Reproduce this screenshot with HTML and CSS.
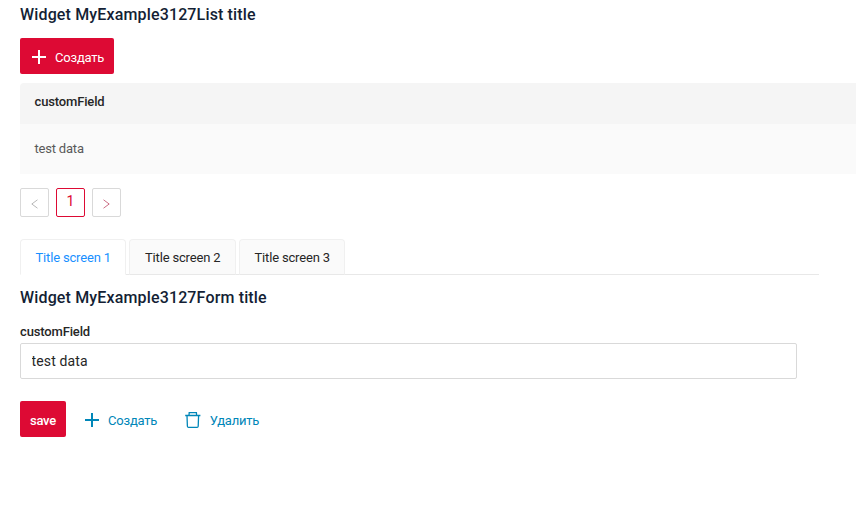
FILE: index.html
```html
<!DOCTYPE html>
<html lang="ru">
<head>
<meta charset="utf-8">
<title>MyExample3127</title>
<link rel="stylesheet" href="styles.css">
</head>
<body>
<main class="page">
  <section>
    <h2 class="title">Widget MyExample3127List title</h2>
    <button class="btn btn-primary btn-add">
      <svg class="plus" width="14" height="14" viewBox="0 0 14 14"><path d="M6 0h2v6h6v2H8v6H6V8H0V6h6z"/></svg>
      <span>Создать</span>
    </button>
    <div class="table">
      <div class="table-head">customField</div>
      <div class="table-row">test data</div>
    </div>
    <nav class="pages">
      <span class="page-item prev"><svg width="7" height="10" viewBox="0 0 7 10"><path d="M6.5 .8L.8 5l5.700 4.200"/></svg></span>
      <span class="page-item active">1</span>
      <span class="page-item next"><svg width="7" height="10" viewBox="0 0 7 10"><path d="M.5 .8L6.200 5 .5 9.200"/></svg></span>
    </nav>
  </section>
  <nav class="tabs">
    <span class="tab selected">Title screen 1</span>
    <span class="tab tab-wide">Title screen 2</span>
    <span class="tab">Title screen 3</span>
  </nav>
  <section>
    <h2 class="title form-title">Widget MyExample3127Form title</h2>
    <label class="label" for="field">customField</label>
    <input class="input" id="field" type="text" value="test data">
    <div class="actions">
      <button class="btn btn-primary btn-save"><span>save</span></button>
      <button class="btn btn-link">
        <svg class="plus" width="14" height="14" viewBox="0 0 14 14"><path d="M6 0h2v6h6v2H8v6H6V8H0V6h6z"/></svg>
        <span>Создать</span>
      </button>
      <button class="btn btn-link btn-delete">
        <svg class="trash" width="16" height="16" viewBox="0 0 16 16"><path d="M.2 3.500h15.200M4 3.200L4.200.7h7.200l.2 2.500M2 3.700l.4 10.500q.1 1.100 1.100 1.100h8.600q1 0 1.100-1.100l.4-10.500"/></svg>
        <span>Удалить</span>
      </button>
    </div>
  </section>
</main>
</body>
</html>
```
FILE: styles.css
```css
* { box-sizing: border-box; }
body {
  margin: 0;
  background: #fff;
  color: #262626;
  font-family: Roboto, sans-serif;
  font-size: 13px;
  overflow: hidden;
}
.page { padding: 3px 0 0 20px; }
.title {
  margin: 0 0 11px;
  color: #141f35;
  font-size: 16px;
  font-weight: 500;
  letter-spacing: .15px;
  line-height: 24px;
}
.btn {
  display: flex;
  align-items: center;
  height: 36px;
  margin: 0;
  padding: 0;
  border: 0;
  border-radius: 2px;
  background: none;
  font: 400 13px/20px Roboto, sans-serif;
  letter-spacing: -.2px;
  white-space: nowrap;
}
.btn svg { flex: none; }
.btn span { padding-top: 2px; }
.plus { fill: currentColor; }
.btn-primary { background: #dd0a34; color: #fff; }
.btn-add { width: 94px; padding: 2px 0 0 12px; gap: 9px; }
.table {
  margin-top: 9px;
  border-radius: 4px 0 0 0;
  overflow: hidden;
}
.table-head {
  height: 41px;
  padding: 9px 14.500px;
  background: #f5f5f5;
  font-weight: 500;
  letter-spacing: -.15px;
  line-height: 20px;
}
.table-row {
  height: 50px;
  padding: 15px 14.500px;
  background: #fafafa;
  color: #595959;
  letter-spacing: -.2px;
  line-height: 20px;
}
.pages { display: flex; gap: 7px; margin-top: 14px; }
.page-item {
  display: flex;
  align-items: center;
  justify-content: center;
  width: 29px;
  height: 29px;
  border: 1px solid #d9d9d9;
  border-radius: 2px;
}
.page-item svg { fill: none; stroke: #b8b8b8; margin-top: 2px; }
.page-item.next svg { stroke: #cc6f86; }
.page-item.active {
  padding-bottom: 3px;
  border-color: #dd0a34;
  color: #dd0a34;
  font-size: 14px;
}
.tabs {
  display: flex;
  gap: 3px;
  width: 799px;
  height: 36px;
  margin-top: 22px;
  border-bottom: 1px solid #e8e8e8;
}
.tab {
  width: 106px;
  height: 36px;
  padding-left: 14.500px;
  border: 1px solid #f0f0f0;
  border-bottom-color: #e8e8e8;
  border-radius: 4px 4px 0 0;
  background: #fafafa;
  letter-spacing: -.17px;
  line-height: 35px;
  white-space: nowrap;
}
.tab-wide { width: 107px; padding-left: 15px; }
.tab.selected { background: #fff; border-bottom-color: #fff; color: #1890ff; }
.form-title { margin: 11px 0 12px; }
.label { display: block; font-weight: 500; letter-spacing: -.15px; line-height: 20px; }
.input {
  display: block;
  width: 777px;
  height: 36px;
  margin-top: 1px;
  padding: 0 10.500px;
  border: 1px solid #d9d9d9;
  border-radius: 2px;
  color: #262626;
  font: 400 14px Roboto, sans-serif;
  letter-spacing: .15px;
}
.actions { display: flex; margin-top: 22px; }
.btn-save { width: 46px; justify-content: center; font-weight: 500; padding-top: 2px; }
.btn-link { margin-left: 19px; color: #0086b8; gap: 9px; padding-top: 2px; }
.btn-delete { margin-left: 28px; gap: 8.500px; }
.trash { fill: none; stroke: currentColor; stroke-width: 1.300; }
```
